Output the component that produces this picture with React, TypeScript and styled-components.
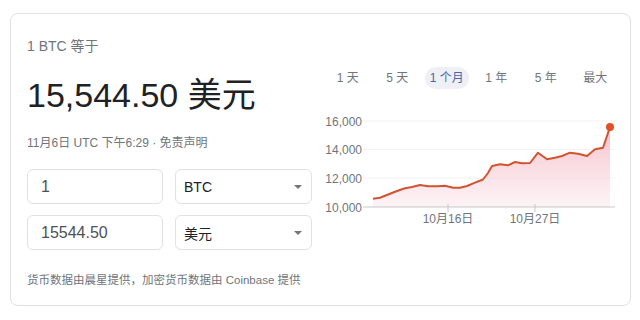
import styled, { createGlobalStyle } from 'styled-components';

const GlobalStyle = createGlobalStyle`
  body {
    margin: 0;
    background: #ffffff;
    font-family: 'Liberation Sans', Arial, 'Noto Sans CJK SC', sans-serif;
  }
`;

const RANGES = ['1 天', '5 天', '1 个月', '1 年', '5 年', '最大'];

// page coordinates of the price line, read off the chart
const POINTS: [number, number][] = [
  [373, 197.7], [380, 196.7], [390, 192.7], [397, 190], [405, 187.3],
  [412, 186], [420, 184], [428, 185.3], [437, 185.3], [445, 184.7],
  [453, 186.7], [460, 186.7], [467, 185], [475, 181.7], [483, 178.5],
  [488, 172], [492, 165], [500, 163.3], [508, 164.3], [515, 161],
  [522, 162.3], [530, 162], [538, 151.7], [547, 158.3], [555, 156.7],
  [562, 155], [570, 151.7], [578, 152.7], [587, 155], [595, 148.3],
  [603, 146.7], [610, 126],
];

const Y_TICKS = [
  { label: '16,000', y: 120 },
  { label: '14,000', y: 148.5 },
  { label: '12,000', y: 177 },
  { label: '10,000', y: 206 },
];

const X_TICKS = [
  { label: '10月16日', x: 448 },
  { label: '10月27日', x: 535 },
];

function PriceChart() {
  const line = POINTS.map(([x, y]) => `${x},${y}`).join(' ');
  const first = POINTS[0];
  const last = POINTS[POINTS.length - 1];
  const area = `${first[0]},206 ${line} ${last[0]},206`;

  return (
    <ChartSvg viewBox="323 110 297 118" width={297} height={118}>
      <defs>
        <linearGradient id="fill" x1="0" y1="0" x2="0" y2="1">
          <stop offset="0%" stopColor="#f3a9b8" stopOpacity={0.75} />
          <stop offset="100%" stopColor="#fbe3e8" stopOpacity={0.45} />
        </linearGradient>
      </defs>
      {Y_TICKS.slice(0, 3).map((t) => (
        <line key={t.label} x1={363} x2={615} y1={t.y} y2={t.y} stroke="#f3f3f3" strokeWidth={1} />
      ))}
      <polygon points={area} fill="url(#fill)" />
      <line x1={363} x2={615} y1={206} y2={206} stroke="#c4c7ca" strokeWidth={1.2} />
      {X_TICKS.map((t) => (
        <line key={t.label} x1={t.x} x2={t.x} y1={203} y2={211} stroke="#c4c7ca" strokeWidth={1} />
      ))}
      <polyline points={line} fill="none" stroke="#cf5530" strokeWidth={2} strokeLinejoin="round" />
      <circle cx={last[0]} cy={last[1]} r={4} fill="#e0502b" />
      {Y_TICKS.map((t) => (
        <AxisText key={t.label} x={362} y={t.y + 4.5} textAnchor="end">
          {t.label}
        </AxisText>
      ))}
      {X_TICKS.map((t) => (
        <AxisText key={t.label} x={t.x} y={222} textAnchor="middle">
          {t.label}
        </AxisText>
      ))}
    </ChartSvg>
  );
}

function Caret() {
  return (
    <CaretSvg width="8" height="4" viewBox="0 0 8 4">
      <path d="M0 0h8L4 4z" fill="#70757a" />
    </CaretSvg>
  );
}

export default function App() {
  return (
    <Page>
      <GlobalStyle />
      <Card>
        <LeftColumn>
          <Subtitle>1 BTC 等于</Subtitle>
          <Rate>15,544.50 美元</Rate>
          <Meta>
            11月6日 UTC 下午6:29 · <MetaLink>免责声明</MetaLink>
          </Meta>
          <Converter>
            <AmountBox>1</AmountBox>
            <CurrencySelect>
              <span>BTC</span>
              <Caret />
            </CurrencySelect>
            <AmountBox>15544.50</AmountBox>
            <CurrencySelect>
              <span>美元</span>
              <Caret />
            </CurrencySelect>
          </Converter>
          <Footnote>货币数据由晨星提供，加密货币数据由 Coinbase 提供</Footnote>
        </LeftColumn>
        <RightColumn>
          <RangeTabs>
            {RANGES.map((r) => (
              <RangeTab key={r}>
                <RangeLabel $active={r === '1 个月'}>{r}</RangeLabel>
              </RangeTab>
            ))}
          </RangeTabs>
          <PriceChart />
        </RightColumn>
      </Card>
    </Page>
  );
}

const Page = styled.div`
  padding: 13px 9px 14px 10px;
`;

const Card = styled.div`
  box-sizing: border-box;
  width: 621px;
  height: 293px;
  border: 1px solid #dfe1e5;
  border-radius: 8px;
  padding: 0 10px 0 16px;
  display: grid;
  grid-template-columns: 285px 297px;
  column-gap: 11px;
`;

const LeftColumn = styled.div`
  display: flex;
  flex-direction: column;
  padding-top: 22px;
`;

const Subtitle = styled.div`
  font-size: 14px;
  line-height: 20px;
  color: #70757a;
`;

const Rate = styled.div`
  margin-top: 19px;
  font-size: 34px;
  line-height: 40px;
  color: #202124;
`;

const Meta = styled.div`
  margin-top: 20px;
  font-size: 12px;
  line-height: 16px;
  color: #70757a;
`;

const MetaLink = styled.span`
  color: #70757a;
`;

const Converter = styled.div`
  margin-top: 18px;
  display: grid;
  grid-template-columns: 136px 137px;
  grid-auto-rows: 35px;
  column-gap: 12px;
  row-gap: 11px;
`;

const AmountBox = styled.div`
  box-sizing: border-box;
  border: 1px solid #dfe1e5;
  border-radius: 6px;
  padding: 0 13px;
  display: flex;
  align-items: center;
  font-size: 16px;
  color: #4d5156;
`;

const CurrencySelect = styled.div`
  box-sizing: border-box;
  border: 1px solid #dfe1e5;
  border-radius: 6px;
  padding: 0 9px 0 8px;
  display: flex;
  align-items: center;
  justify-content: space-between;
  font-size: 14px;
  color: #202124;
`;

const CaretSvg = styled.svg`
  display: block;
`;

const Footnote = styled.div`
  margin-top: 22px;
  font-size: 11.5px;
  line-height: 16px;
  color: #70757a;
  white-space: nowrap;
`;

const RightColumn = styled.div`
  display: flex;
  flex-direction: column;
  padding-top: 53px;
`;

const RangeTabs = styled.div`
  display: flex;
  height: 22px;
`;

const RangeTab = styled.div`
  flex: 1;
  display: flex;
  justify-content: center;
`;

const RangeLabel = styled.span<{ $active?: boolean }>`
  padding: 0 5px;
  border-radius: 11px;
  line-height: 22px;
  font-size: 12px;
  color: ${({ $active }) => ($active ? '#4868a8' : '#70757a')};
  background: ${({ $active }) => ($active ? '#eef0f5' : 'transparent')};
`;

const ChartSvg = styled.svg`
  display: block;
  margin-top: 22px;
  overflow: visible;
`;

const AxisText = styled.text`
  font-family: 'Liberation Sans', Arial, 'Noto Sans CJK SC', sans-serif;
  font-size: 12px;
  fill: #70757a;
`;
